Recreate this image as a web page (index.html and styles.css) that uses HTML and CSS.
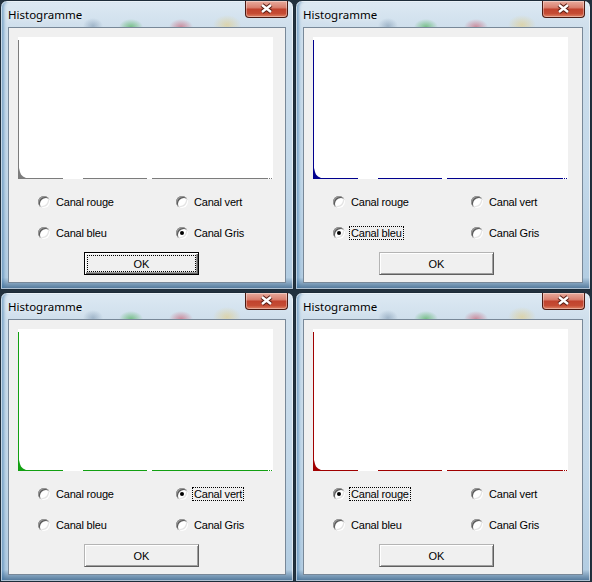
FILE: index.html
```html
<!DOCTYPE html>
<html>
<head>
<meta charset="utf-8">
<link rel="stylesheet" href="styles.css">
</head>
<body>
<div class="desk">

  <section class="win">
    <div class="titlebar"><span class="title">Histogramme</span>
      <span class="close"><svg width="43" height="17" viewBox="0 0 43 17"><path d="M17 5L26 12M26 5L17 12" stroke="#5a1e14" stroke-width="4.6"/><path d="M17 5L26 12M26 5L17 12" stroke="#fff" stroke-width="2.4"/></svg></span>
    </div>
    <div class="client">
      <div class="plot c-gray">
        <svg width="255" height="142" viewBox="0 0 255 142"><path d="M0.5 3V142" stroke="currentColor"/><path d="M0 141.5H45M65 141.5H129M134 141.5H249" stroke="currentColor"/><path d="M249 141.5H255" stroke="currentColor" stroke-dasharray="1 1"/><path d="M0 142V126L1 131L2 135L3 137.5L5 139.5L8 141L9 142Z" fill="currentColor"/></svg>
      </div>
      <div class="radios">
        <div class="radio"><span class="rb"></span><span class="lbl">Canal rouge</span></div>
        <div class="radio"><span class="rb"></span><span class="lbl">Canal vert</span></div>
        <div class="radio"><span class="rb"></span><span class="lbl">Canal bleu</span></div>
        <div class="radio"><span class="rb on"></span><span class="lbl">Canal Gris</span></div>
      </div>
      <div class="ok def"><span class="cap focus">OK</span></div>
    </div>
  </section>

  <section class="win">
    <div class="titlebar"><span class="title">Histogramme</span>
      <span class="close"><svg width="43" height="17" viewBox="0 0 43 17"><path d="M17 5L26 12M26 5L17 12" stroke="#5a1e14" stroke-width="4.6"/><path d="M17 5L26 12M26 5L17 12" stroke="#fff" stroke-width="2.4"/></svg></span>
    </div>
    <div class="client">
      <div class="plot c-blue">
        <svg width="255" height="142" viewBox="0 0 255 142"><path d="M0.5 3V142" stroke="currentColor"/><path d="M0 141.5H45M65 141.5H129M134 141.5H249" stroke="currentColor"/><path d="M249 141.5H255" stroke="currentColor" stroke-dasharray="1 1"/><path d="M0 142V126L1 131L2 135L3 137.5L5 139.5L8 141L9 142Z" fill="currentColor"/></svg>
      </div>
      <div class="radios">
        <div class="radio"><span class="rb"></span><span class="lbl">Canal rouge</span></div>
        <div class="radio"><span class="rb"></span><span class="lbl">Canal vert</span></div>
        <div class="radio"><span class="rb on"></span><span class="lbl focus">Canal bleu</span></div>
        <div class="radio"><span class="rb"></span><span class="lbl">Canal Gris</span></div>
      </div>
      <div class="ok"><span class="cap">OK</span></div>
    </div>
  </section>

  <section class="win">
    <div class="titlebar"><span class="title">Histogramme</span>
      <span class="close"><svg width="43" height="17" viewBox="0 0 43 17"><path d="M17 5L26 12M26 5L17 12" stroke="#5a1e14" stroke-width="4.6"/><path d="M17 5L26 12M26 5L17 12" stroke="#fff" stroke-width="2.4"/></svg></span>
    </div>
    <div class="client">
      <div class="plot c-green">
        <svg width="255" height="142" viewBox="0 0 255 142"><path d="M0.5 3V142" stroke="currentColor"/><path d="M0 141.5H45M65 141.5H129M134 141.5H249" stroke="currentColor"/><path d="M249 141.5H255" stroke="currentColor" stroke-dasharray="1 1"/><path d="M0 142V126L1 131L2 135L3 137.5L5 139.5L8 141L9 142Z" fill="currentColor"/></svg>
      </div>
      <div class="radios">
        <div class="radio"><span class="rb"></span><span class="lbl">Canal rouge</span></div>
        <div class="radio"><span class="rb on"></span><span class="lbl focus">Canal vert</span></div>
        <div class="radio"><span class="rb"></span><span class="lbl">Canal bleu</span></div>
        <div class="radio"><span class="rb"></span><span class="lbl">Canal Gris</span></div>
      </div>
      <div class="ok"><span class="cap">OK</span></div>
    </div>
  </section>

  <section class="win">
    <div class="titlebar"><span class="title">Histogramme</span>
      <span class="close"><svg width="43" height="17" viewBox="0 0 43 17"><path d="M17 5L26 12M26 5L17 12" stroke="#5a1e14" stroke-width="4.6"/><path d="M17 5L26 12M26 5L17 12" stroke="#fff" stroke-width="2.4"/></svg></span>
    </div>
    <div class="client">
      <div class="plot c-red">
        <svg width="255" height="142" viewBox="0 0 255 142"><path d="M0.5 3V142" stroke="currentColor"/><path d="M0 141.5H45M65 141.5H129M134 141.5H249" stroke="currentColor"/><path d="M249 141.5H255" stroke="currentColor" stroke-dasharray="1 1"/><path d="M0 142V126L1 131L2 135L3 137.5L5 139.5L8 141L9 142Z" fill="currentColor"/></svg>
      </div>
      <div class="radios">
        <div class="radio"><span class="rb on"></span><span class="lbl focus">Canal rouge</span></div>
        <div class="radio"><span class="rb"></span><span class="lbl">Canal vert</span></div>
        <div class="radio"><span class="rb"></span><span class="lbl">Canal bleu</span></div>
        <div class="radio"><span class="rb"></span><span class="lbl">Canal Gris</span></div>
      </div>
      <div class="ok"><span class="cap">OK</span></div>
    </div>
  </section>

</div>
</body>
</html>
```
FILE: styles.css
```css
* { box-sizing: border-box; }
html, body { margin: 0; padding: 0; }
body {
  width: 592px;
  height: 582px;
  overflow: hidden;
  background: #22313e;
  font-family: "Liberation Sans", Arial, sans-serif;
}
.desk {
  display: grid;
  grid-template-columns: 294px 296px;
  grid-template-rows: 290px 290px;
  column-gap: 1px;
  row-gap: 2px;
}
.win {
  position: relative;
  display: flex;
  flex-direction: column;
  padding: 0 7px 6px;
  border: 1px solid #1d2c39;
  border-radius: 7px 7px 0 0;
  background:
    radial-gradient(ellipse 10px 8px at 92px 25px, rgba(90,120,150,.4), transparent),
    radial-gradient(ellipse 12px 8px at 130px 26px, rgba(60,170,70,.6), transparent),
    radial-gradient(ellipse 12px 8px at 180px 26px, rgba(200,70,90,.55), transparent),
    radial-gradient(ellipse 14px 10px at 226px 24px, rgba(230,200,110,.5), transparent),
    linear-gradient(180deg, #dde9f3 0, #cfdfec 26px, #c3d8e9 60%, #b3cde2 96%, #4f7598 100%);
  box-shadow: inset 0 0 0 1px rgba(255,255,255,.55), inset 4px 0 3px -1px rgba(60,120,170,.55);
}
.titlebar {
  height: 26px;
  display: flex;
  align-items: center;
}
.title {
  font-family: "Noto Sans", "Open Sans", sans-serif;
  font-size: 11.5px;
  color: #000;
  margin-top: 1px;
  text-shadow: 0 0 6px rgba(255,255,255,.9);
}
.close {
  position: absolute;
  top: 0;
  right: 5px;
  width: 43px;
  height: 17px;
  border: 1px solid #4a1a12;
  border-top: none;
  border-radius: 0 0 4px 4px;
  background: linear-gradient(180deg, #e8ab9d 0%, #d98170 40%, #c1432e 52%, #c54c34 78%, #df8467 100%);
  box-shadow: inset 0 0 0 1px rgba(255,255,255,.35);
}
.close svg { display: block; margin: -1px 0 0 -1px; }
.client {
  flex: 1;
  border: 1px solid #788898;
  background: #f0f0f0;
  padding: 9px 0 0 9px;
}
.plot {
  width: 255px;
  height: 142px;
  background: #fff;
}
.plot svg { display: block; }
.c-gray { color: #7c7c7c; }
.c-blue { color: #00008e; }
.c-green { color: #12a012; }
.c-red { color: #a00000; }
.radios {
  margin: 16px 0 0 20px;
  display: grid;
  grid-template-columns: 138px 100px;
  grid-auto-rows: 14px;
  row-gap: 17px;
}
.radio {
  display: flex;
  align-items: center;
  gap: 4px;
}
.rb {
  position: relative;
  width: 12px;
  height: 12px;
  border-radius: 50%;
  background: #fff;
  box-shadow: inset 1px 1px 0 #9a9a9a, inset -1px -1px 0 #fff, inset 2px 2px 0 #5a5a5a, inset -2px -2px 0 #e3e3e3;
}
.rb.on::after {
  content: "";
  position: absolute;
  left: 4px;
  top: 4px;
  width: 4px;
  height: 4px;
  border-radius: 50%;
  background: #000;
}
.lbl {
  font-size: 11px;
  letter-spacing: -0.2px;
  line-height: 12px;
  color: #000;
  padding: 0 1px;
  border: 1px solid transparent;
}
.lbl.focus { border: 1px dotted #000; }
.ok {
  margin: 12px 0 0 66px;
  width: 115px;
  height: 23px;
  display: flex;
  padding: 2px;
  background: #f0f0f0;
  border: 1px solid;
  border-color: #b4b4b4 #5f5f5f #5f5f5f #b4b4b4;
  box-shadow: inset 1px 1px 0 #fff, inset -1px -1px 0 #a0a0a0;
}
.ok.def {
  border-color: #000;
  box-shadow: inset 1px 1px 0 #fff, inset -1px -1px 0 #5f5f5f, inset -2px -2px 0 #a0a0a0;
}
.cap {
  flex: 1;
  display: flex;
  align-items: center;
  justify-content: center;
  font-size: 11px;
  color: #000;
  border: 1px dotted transparent;
}
.cap.focus { border-color: #000; }
```
